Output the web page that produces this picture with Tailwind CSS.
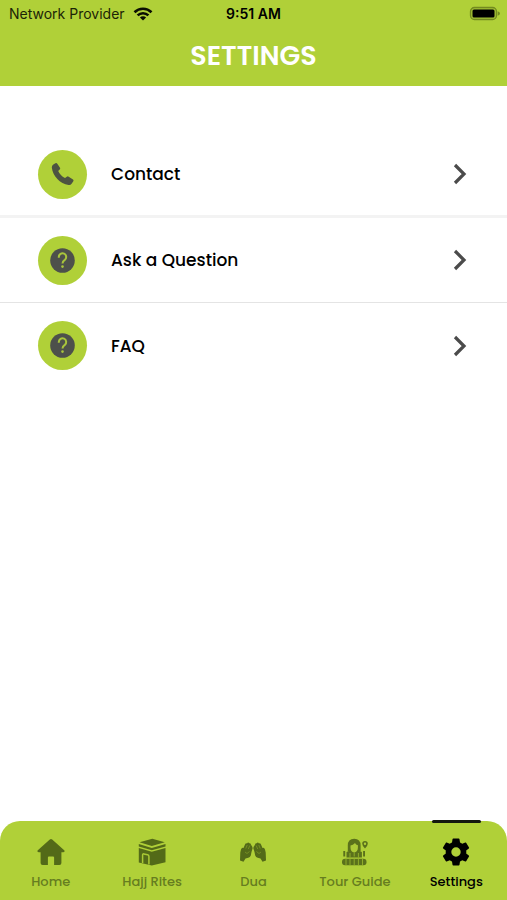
<!DOCTYPE html>
<html lang="en">
<head>
<meta charset="utf-8">
<meta name="viewport" content="width=device-width, initial-scale=1">
<title>Settings</title>
<script src="https://cdn.jsdelivr.net/npm/@tailwindcss/browser@4"></script>
</head>
<body class="flex min-h-screen flex-col bg-white font-['Poppins','Inter',sans-serif] text-black">
<header class="bg-[#b0d038] pb-2.5">
  <div class="grid h-7 grid-cols-3 items-center px-[9px] font-['Inter',sans-serif] text-sm">
    <div class="flex items-center gap-2 whitespace-nowrap text-[#1c2406]">
      <span>Network Provider</span>
      <svg class="h-3.5 w-5 shrink-0" viewBox="0 0 20 14" fill="none" stroke="#0b0e02" stroke-width="2.6" aria-label="Wi-Fi"><path d="M1.5 5.2a12.2 12.2 0 0 1 17 0M4.6 8.4a7.7 7.7 0 0 1 10.8 0"/><path d="M10 13.6 6.9 10.6a4.4 4.4 0 0 1 6.2 0z" fill="#0b0e02" stroke="none"/></svg>
    </div>
    <time class="text-center font-semibold">9:51 AM</time>
    <svg class="-mr-0.5 h-4 w-8 justify-self-end" viewBox="0 0 32 16" aria-label="Battery"><rect x="2.5" y="1.5" width="26" height="12" rx="4" fill="#a2c034" stroke="#738a20" stroke-width="1.3"/><rect x="4.5" y="3.5" width="22" height="8" rx="1.5" fill="#000"/><path d="M29.7 5.2q2.3 1 2.3 2.3t-2.3 2.3z" fill="#738a20"/></svg>
  </div>
  <h1 class="pt-2 text-center text-[27px] leading-10 font-semibold text-white">SETTINGS</h1>
</header>

<main class="grow pt-[47px]">
  <a href="#contact" class="flex h-[85px] items-center border-b-3 border-[#f3f3f3] pr-[39px] pl-[38px]">
    <span class="grid size-[49px] place-items-center rounded-full bg-[#b0d038]">
      <svg class="size-6" viewBox="0 0 24 24" fill="#4d5341" aria-hidden="true"><path d="M2.3 2.6 4.4 1.2q1.2-.6 1.9.5l2.7 4q.6 1.100-.3 1.900L7.200 9q2 4.500 6.800 7l1.800-1.300q1-.7 1.900 0l4.300 2.700q1 .8.300 1.800l-1.700 2.600q-1 1.500-3 1.200C9 22 1.800 14 .8 5.500q0-1.800 1.500-2.900z"/></svg>
    </span>
    <span class="grow pt-0.5 pl-6 text-[17px] font-medium">Contact</span>
    <svg class="h-6 w-4" viewBox="0 0 16 24" fill="none" stroke="#4b4b4b" stroke-width="3.2" aria-hidden="true"><path d="m3 3 9 9-9 9"/></svg>
  </a>
  <a href="#ask" class="flex h-[85px] items-center border-b border-[#e4e4e4] pr-[39px] pl-[38px]">
    <span class="grid size-[49px] place-items-center rounded-full bg-[#b0d038]">
      <svg class="size-[25px]" viewBox="0 0 25 25" fill="none" aria-hidden="true"><circle cx="12.5" cy="12.5" r="12.3" fill="#4d504b"/><path d="M8.800 9.700V9a3.700 3.700 0 1 1 6 2.900c-1.500 1.100-2.300 1.800-2.300 3.500" stroke="#a9c53c" stroke-width="2"/><circle cx="12.5" cy="18.6" r="1.3" fill="#a9c53c"/></svg>
    </span>
    <span class="grow pt-0.5 pl-6 text-[17px] font-medium">Ask a Question</span>
    <svg class="h-6 w-4" viewBox="0 0 16 24" fill="none" stroke="#4b4b4b" stroke-width="3.2" aria-hidden="true"><path d="m3 3 9 9-9 9"/></svg>
  </a>
  <a href="#faq" class="flex h-[85px] items-center pr-[39px] pl-[38px]">
    <span class="grid size-[49px] place-items-center rounded-full bg-[#b0d038]">
      <svg class="size-[25px]" viewBox="0 0 25 25" fill="none" aria-hidden="true"><circle cx="12.5" cy="12.5" r="12.3" fill="#4d504b"/><path d="M8.800 9.700V9a3.700 3.700 0 1 1 6 2.900c-1.500 1.100-2.300 1.800-2.300 3.500" stroke="#a9c53c" stroke-width="2"/><circle cx="12.5" cy="18.6" r="1.3" fill="#a9c53c"/></svg>
    </span>
    <span class="grow pt-0.5 pl-6 text-[17px] font-medium">FAQ</span>
    <svg class="h-6 w-4" viewBox="0 0 16 24" fill="none" stroke="#4b4b4b" stroke-width="3.2" aria-hidden="true"><path d="m3 3 9 9-9 9"/></svg>
  </a>
</main>

<nav class="grid grid-cols-5 rounded-t-[20px] bg-[#b0d038] text-[13px] leading-5 font-medium text-[#667d20]">
  <a href="#home" class="flex flex-col items-center gap-[5px] pt-4 pb-2">
    <svg class="h-[30px] w-7" viewBox="0 0 28 30" fill="#536a18" aria-hidden="true"><path d="M12.8 2.400q1.200-1 2.400 0L27.200 13.200q1.200 1.600-.8 2h-2V26q0 2-2 2h-5.300v-7.500q0-1-1-1h-4.200q-1 0-1 1V28H5.600q-2 0-2-2V15.200h-2q-2-.4-.8-2z"/></svg>
    <span>Home</span>
  </a>
  <a href="#rites" class="flex flex-col items-center gap-[5px] pt-4 pb-2">
    <svg class="h-[30px] w-7" viewBox="0 0 28 30" fill="#536a18" aria-hidden="true"><path d="M1.500 5.200 14.300 1.700l12.500 3.500L13.800 9zM.8 7l13 4v2.200L.8 9.400zM27.500 7v2.400l-13.700 3.800V11zM.8 11l13 3.700 13.700-3.700v14.300l-13.700 3.200-13-3z"/><path d="M4.600 26v-8q0-1.300 1.300-1.100l3.700.8q1.300.3 1.300 1.600v8.200" fill="none" stroke="#a9c935" stroke-width="1.500"/></svg>
    <span>Hajj Rites</span>
  </a>
  <a href="#dua" class="flex flex-col items-center gap-[5px] pt-4 pb-2">
    <svg class="h-[30px] w-7" viewBox="0 0 28 30" aria-hidden="true"><g fill="#536a18"><path d="M1 23.500 1.300 15.500 2 12.500Q2.800 10 4.500 11L6 7.500q.7-1.700 2-1.100 1.200-1.500 2.300-.1 1.500-.1 1.700 1.400l1.300 2q.8 1.500-.2 3.300L12.500 15l-.7 3.500q-.6 2-2.500 2.300L6.500 21.500 4.500 24.800z"/><path d="M27 23.500 26.700 15.500 26 12.500Q25.200 10 23.500 11L22 7.500q-.7-1.700-2-1.100-1.200-1.500-2.300-.1-1.500-.1-1.700 1.400l-1.300 2q-.8 1.500.2 3.300l.6 2 .7 3.500q.6 2 2.500 2.300l2.800.7 2 3.300z"/></g><path d="M8.200 8 6.800 11.500m4-3L9.300 12M6 15l2 1.500 2.500-2M19.800 8l1.400 3.500m-4-3 1.500 3.500M22 15l-2 1.500-2.500-2" fill="none" stroke="#829e27" stroke-width=".7"/></svg>
    <span>Dua</span>
  </a>
  <a href="#guide" class="flex flex-col items-center gap-[5px] pt-4 pb-2">
    <svg class="h-[30px] w-7" viewBox="0 0 28 30" fill="#5a711b" aria-hidden="true"><path d="M6.800 14.500V8.500Q6.800 1.800 13.200 1.800T19.600 8.500v6z"/><path d="M5.500 15q3-1.500 4.800-1.500h5.800q1.800 0 4.800 1.500v5.500H5.500zM2.300 14h1.900v5.500H2.300zm19.800 0H24v5.500h-1.900z"/><path d="M9.500 8.500q2.500-.2 4.500-2.400.8 1.800 2.900 2.200v2.500q0 4-3.700 4.800-3.700-.8-3.700-4.800z" fill="#acca37"/><rect x="1" y="21.700" width="24.500" height="6.600" rx="3"/><path d="M5 21.700v6.600M9 21.700v6.600M13.200 15.500v4M17.400 21.700v6.600M21.500 21.700v6.600M9 16v4.500M17.400 16v4.500M13.200 21.700v6.600" stroke="#95b32d" stroke-width=".9"/><path fill-rule="evenodd" d="M24 4q2.800 0 2.800 2.700 0 1.800-2.800 4.700-2.800-2.900-2.800-4.700Q21.200 4 24 4zm0 1.500a1.200 1.200 0 1 0 0 2.400 1.200 1.200 0 0 0 0-2.400z"/></svg>
    <span>Tour Guide</span>
  </a>
  <a href="#settings" aria-current="page" class="relative flex flex-col items-center gap-[5px] pt-4 pb-2 text-black before:absolute before:inset-x-[26px] before:-top-px before:h-[3px] before:rounded-full before:bg-[#14170f]">
    <svg class="h-[30px] w-7" viewBox="0 0 28 30" aria-hidden="true"><path fill="#000" fill-rule="evenodd" d="M11.300 1.500h5.400q.7 0 .8.700l.5 3.300q1 .4 2.200 1.300l3.100-1.200q.7-.3 1 .3l2.700 4.600q.3.600-.2 1.100l-2.600 2q.2 1.400 0 2.800l2.600 2q.5.500.2 1.100l-2.700 4.600q-.3.600-1 .3l-3.100-1.200q-1.200.9-2.200 1.300l-.5 3.300q-.1.700-.8.700h-5.400q-.7 0-.8-.7l-.5-3.300q-1-.4-2.200-1.300l-3.100 1.200q-.7.300-1-.3L1 19.500q-.3-.6.200-1.100l2.600-2q-.2-1.400 0-2.800l-2.600-2Q.7 11.100 1 10.500l2.700-4.600q.3-.6 1-.3l3.100 1.200q1.200-.9 2.200-1.300l.5-3.300q.1-.7.8-.7zM14 10.300a4.700 4.700 0 1 0 0 9.400 4.700 4.700 0 0 0 0-9.400z"/></svg>
    <span>Settings</span>
  </a>
</nav>
</body>
</html>
